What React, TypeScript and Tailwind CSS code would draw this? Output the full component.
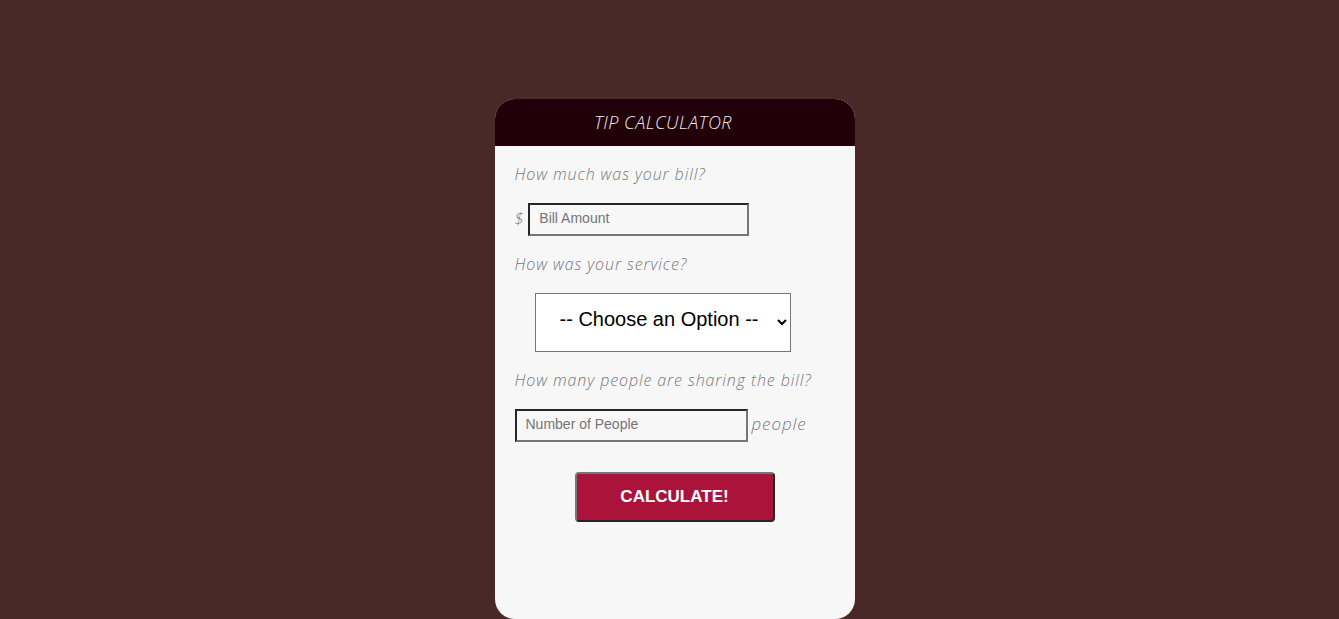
import { useState } from 'react';

export default function App() {
  const [bill, setBill] = useState('');
  const [people, setPeople] = useState('');
  const [service, setService] = useState('');

  const label = "text-[16px] leading-[24px] italic font-light tracking-[0.9px] text-[#78787c]";
  const field =
    "h-[33px] border-2 border-t-[#262626] border-l-[#262626] border-b-[#767676] border-r-[#767676] px-[9px] pb-[3px] text-[14px] text-[#444] placeholder:text-[#757575] outline-none";

  return (
    <div className="min-h-[619px] bg-[#4b2828] pt-[99px] pl-[10px] font-['Open_Sans',sans-serif]">
      <div className="mx-auto w-[360px] h-[520px] rounded-[20px] overflow-hidden bg-[#f7f7f7]">
        {/* Header */}
        <div className="h-[47px] bg-[#22000a] flex items-center justify-center pr-[23px]">
          <h1 className="text-[18px] italic font-light text-[#ececec] tracking-[0.5px]">TIP CALCULATOR</h1>
        </div>

        <div className="px-5 pt-4">
          <p className={label}>How much was your bill?</p>
          <div className="mt-[17px] flex items-center gap-[5px]">
            <span className="text-[16px] italic font-light text-[#78787c] leading-none pb-[3px]">$</span>
            <input
              value={bill}
              onChange={(e) => setBill(e.target.value)}
              placeholder="Bill Amount"
              className={`${field} w-[221px] font-['Liberation_Sans',Arial,sans-serif]`}
            />
          </div>

          <p className={`${label} mt-4`}>How was your service?</p>
          <div className="mt-[17px] pl-5">
            <select
              value={service}
              onChange={(e) => setService(e.target.value)}
              className="w-[256px] h-[59px] bg-white border border-[#767676] pl-[20px] pr-1 pb-[8px] leading-[20px] text-[20px] text-black font-['Liberation_Sans',Arial,sans-serif]"
            >
              <option value="" disabled>-- Choose an Option --</option>
              <option value="0.3">30% - Outstanding</option>
              <option value="0.2">20% - Good</option>
              <option value="0.15">15% - It was OK</option>
              <option value="0.1">10% - Bad</option>
              <option value="0.05">5% - Terrible</option>
            </select>
          </div>

          <p className={`${label} mt-4`}>How many people are sharing the bill?</p>
          <div className="mt-[17px] flex items-center gap-[4px]">
            <input
              value={people}
              onChange={(e) => setPeople(e.target.value)}
              placeholder="Number of People"
              className={`${field} w-[233px] font-['Liberation_Sans',Arial,sans-serif]`}
            />
            <span className="text-[17px] italic font-light tracking-[0.9px] text-[#78787c] pb-[4px]">people</span>
          </div>

          <div className="mt-[30px] flex justify-center">
            <button className="w-[200px] h-[50px] rounded-[4px] bg-[#ab133a] border-2 border-t-[#767676] border-l-[#767676] border-b-[#262626] border-r-[#262626] text-white font-bold text-[17px] font-['Liberation_Sans',Arial,sans-serif]">
              CALCULATE!
            </button>
          </div>
        </div>
      </div>
    </div>
  );
}
